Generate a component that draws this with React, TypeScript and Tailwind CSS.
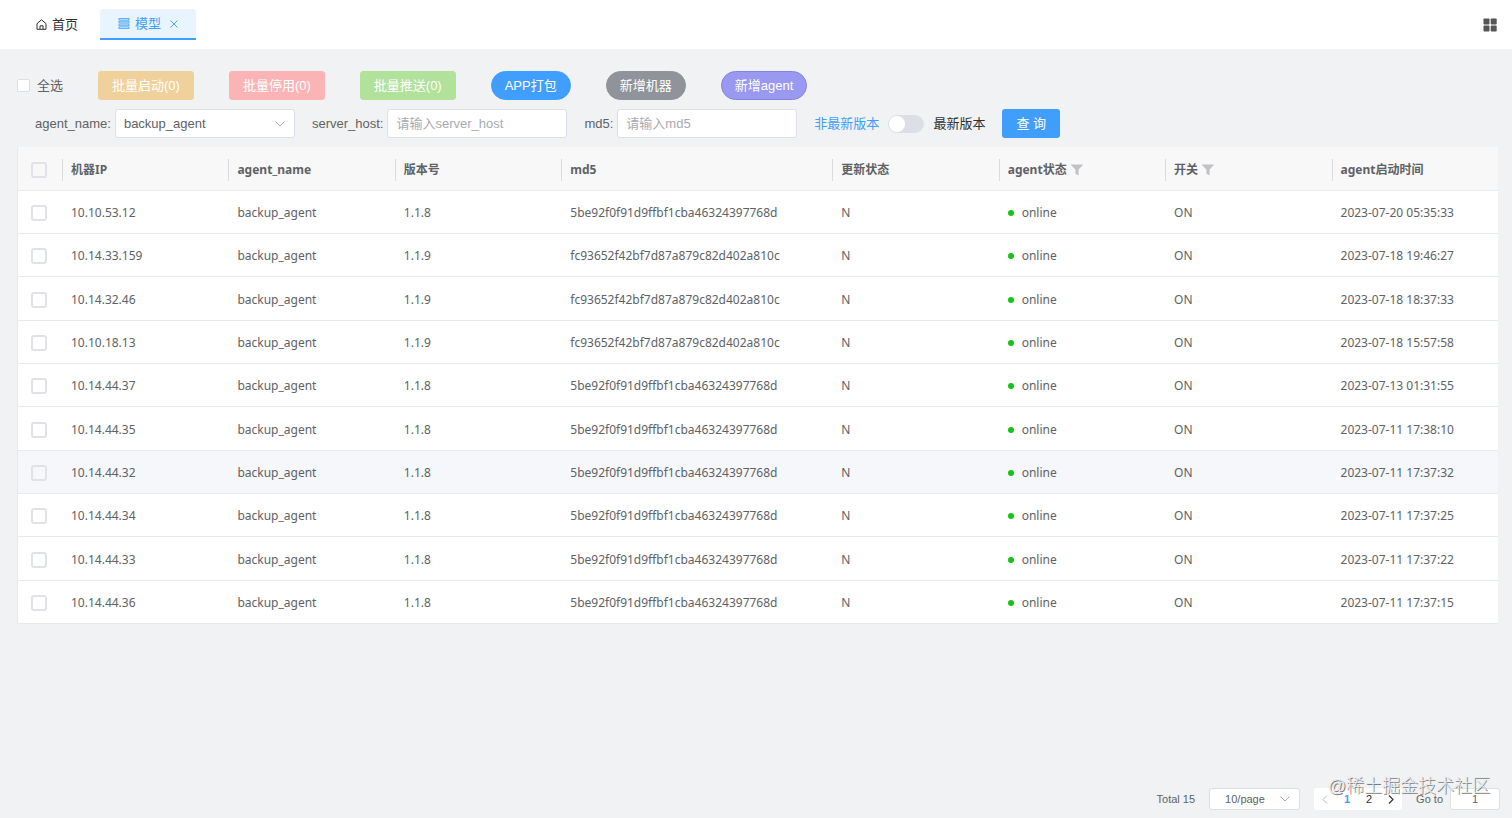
import React, { useState } from 'react';

interface Machine {
  ip: string;
  version: string;
  md5: string;
  startedAt: string;
}

const MD5_118 = '5be92f0f91d9ffbf1cba46324397768d';
const MD5_119 = 'fc93652f42bf7d87a879c82d402a810c';

const MACHINES: Machine[] = [
  { ip: '10.10.53.12', version: '1.1.8', md5: MD5_118, startedAt: '2023-07-20 05:35:33' },
  { ip: '10.14.33.159', version: '1.1.9', md5: MD5_119, startedAt: '2023-07-18 19:46:27' },
  { ip: '10.14.32.46', version: '1.1.9', md5: MD5_119, startedAt: '2023-07-18 18:37:33' },
  { ip: '10.10.18.13', version: '1.1.9', md5: MD5_119, startedAt: '2023-07-18 15:57:58' },
  { ip: '10.14.44.37', version: '1.1.8', md5: MD5_118, startedAt: '2023-07-13 01:31:55' },
  { ip: '10.14.44.35', version: '1.1.8', md5: MD5_118, startedAt: '2023-07-11 17:38:10' },
  { ip: '10.14.44.32', version: '1.1.8', md5: MD5_118, startedAt: '2023-07-11 17:37:32' },
  { ip: '10.14.44.34', version: '1.1.8', md5: MD5_118, startedAt: '2023-07-11 17:37:25' },
  { ip: '10.14.44.33', version: '1.1.8', md5: MD5_118, startedAt: '2023-07-11 17:37:22' },
  { ip: '10.14.44.36', version: '1.1.8', md5: MD5_118, startedAt: '2023-07-11 17:37:15' },
];

const COLUMNS = [
  { title: '机器IP' },
  { title: 'agent_name' },
  { title: '版本号' },
  { title: 'md5', width: 'w-[271px]' },
  { title: '更新状态' },
  { title: 'agent状态', filter: true },
  { title: '开关', filter: true },
  { title: 'agent启动时间' },
];

const ACTIONS = [
  { label: '批量启动(0)', style: 'rounded-[3px] bg-[#f0d09b] border-[#f0d09b]' },
  { label: '批量停用(0)', style: 'rounded-[3px] bg-[#fbb4b5] border-[#fbb4b5]' },
  { label: '批量推送(0)', style: 'rounded-[3px] bg-[#b1e19a] border-[#b1e19a]' },
  { label: 'APP打包', style: 'rounded-full bg-[#409eff] border-[#409eff]' },
  { label: '新增机器', style: 'rounded-full bg-[#909399] border-[#909399]' },
  { label: '新增agent', style: 'rounded-full bg-[#9a99f2] border-[#8583e0]' },
];

const HomeIcon = () => (
  <svg className="size-[11px]" viewBox="0 0 11 11" fill="none" stroke="currentColor" strokeWidth="1" aria-hidden="true">
    <path d="M1 10.3V4.6L5.5.8 10 4.6v5.7zM4 10V6.8h3V10" />
  </svg>
);

const ListIcon = () => (
  <svg className="h-[11px] w-3" viewBox="0 0 12 11" fill="none" stroke="currentColor" strokeWidth=".8" aria-hidden="true">
    <path d="M.9.5h10.2v1.6H.9zM.9 3.3h10.2v1.6H.9zM.9 6.1h10.2v1.6H.9zM.9 8.9h10.2v1.6H.9z" />
  </svg>
);

const CloseIcon = () => (
  <svg className="size-2" viewBox="0 0 7 7" fill="none" stroke="currentColor" strokeWidth=".8" aria-hidden="true">
    <path d="m.4.4 6.2 6.2M6.6.4.4 6.6" />
  </svg>
);

const GridIcon = () => (
  <svg className="size-[14px]" viewBox="0 0 14 14" fill="currentColor" aria-hidden="true">
    <rect x=".5" y=".5" width="6" height="6" rx=".8" />
    <rect x="7.7" y=".5" width="6" height="6" rx=".8" />
    <rect x=".5" y="7.6" width="6" height="6" rx=".8" />
    <rect x="7.7" y="7.6" width="6" height="6" rx=".8" />
  </svg>
);

const ChevronDown = () => (
  <svg className="pointer-events-none absolute right-[10px] h-[6px] w-[10px] text-[#a8abb2]" viewBox="0 0 10 6" fill="none" stroke="currentColor" aria-hidden="true">
    <path d="M.5.5 5 5 9.5.5" />
  </svg>
);

const FilterIcon = () => (
  <svg className="h-3 w-3" viewBox="0 0 13 12" fill="#c0c2c6" aria-hidden="true">
    <path d="M.3 0h12.1c.4 0 .5.5.2.8L8.2 5.4V12L4.8 10V5.4L.1.8C-.1.5 0 0 .3 0z" />
  </svg>
);

const App: React.FC = () => {
  const [checked, setChecked] = useState<Record<string, boolean>>({});
  const [latest, setLatest] = useState(false);

  const allChecked = MACHINES.every(m => checked[m.ip]);

  const toggleAll = () =>
    setChecked(Object.fromEntries(MACHINES.map(m => [m.ip, !allChecked])));

  const toggle = (ip: string) => setChecked(prev => ({ ...prev, [ip]: !prev[ip] }));

  const field = 'h-[29px] w-[180px] rounded-[3px] border border-[#dcdfe6] bg-white text-[#606266] placeholder:text-[#a8abb2] outline-none';
  const box = 'block appearance-none border checked:border-[#409eff] checked:bg-[#409eff]';

  return (
    <div className="relative flex min-h-screen flex-col bg-[#f0f2f4] font-['Liberation_Sans','Noto_Sans_CJK_SC',sans-serif] text-[13px] leading-5 text-[#606266]">
      <header className="flex h-[49px] items-center justify-between bg-white pr-[15px] pl-9">
        <nav className="flex items-center gap-[22px]">
          <a href="#home" className="flex items-center gap-[5px] text-[#303133]">
            <HomeIcon />
            首页
          </a>
          <div className="flex h-[31px] items-center gap-[9px] rounded-t-[3px] border-b-2 border-[#409eff] bg-[#e8f4ff] px-[18px] text-[#409eff]">
            <a href="#model" className="flex items-center gap-[5px]">
              <ListIcon />
              模型
            </a>
            <button type="button" aria-label="关闭">
              <CloseIcon />
            </button>
          </div>
        </nav>
        <button type="button" aria-label="菜单" className="text-[#555]">
          <GridIcon />
        </button>
      </header>

      <main className="flex flex-1 flex-col pt-[22px] pr-[14px] pb-2 pl-[17px]">
        <div className="flex items-center gap-[35px]">
          <label className="flex items-center gap-[7px]">
            <input type="checkbox" checked={allChecked} onChange={toggleAll} className={`${box} size-[13px] rounded-[2px] border-[#dcdfe6] bg-white`} />
            全选
          </label>
          {ACTIONS.map(action => (
            <button key={action.label} type="button" className={`h-[29px] border px-[13px] text-white ${action.style}`}>
              {action.label}
            </button>
          ))}
        </div>

        <form className="mt-[9px] flex items-center gap-[17px] pl-[18px]" onSubmit={e => e.preventDefault()}>
          <div className="flex items-center gap-1">
            <label htmlFor="agent-name">agent_name:</label>
            <div className="relative flex items-center">
              <select id="agent-name" className={`${field} appearance-none px-2`}>
                <option>backup_agent</option>
              </select>
              <ChevronDown />
            </div>
          </div>
          <div className="flex items-center gap-1">
            <label htmlFor="server-host">server_host:</label>
            <input id="server-host" type="text" placeholder="请输入server_host" className={`${field} px-2`} />
          </div>
          <div className="flex items-center gap-1">
            <label htmlFor="md5">md5:</label>
            <input id="md5" type="text" placeholder="请输入md5" className={`${field} px-2`} />
          </div>
          <label className="flex items-center gap-[9px]">
            <span className={latest ? 'text-[#303133]' : 'text-[#409eff]'}>非最新版本</span>
            <input
              type="checkbox"
              role="switch"
              checked={latest}
              onChange={e => setLatest(e.target.checked)}
              className="relative h-[18px] w-9 appearance-none rounded-full bg-[#dcdfe6] before:absolute before:top-px before:left-px before:size-4 before:rounded-full before:bg-white checked:bg-[#409eff] checked:before:left-[19px]"
            />
            <span className={latest ? 'text-[#409eff]' : 'text-[#303133]'}>最新版本</span>
          </label>
          <button type="submit" className="h-[29px] rounded-[3px] bg-[#409eff] px-[14px] text-white">
            查 询
          </button>
        </form>

        <table className="mt-[9px] w-full table-fixed border-separate border-spacing-0 border-l border-[#e8eaec] bg-white font-['Noto_Sans','Noto_Sans_CJK_SC',sans-serif] text-[12px]">
          <thead>
            <tr className="h-11 bg-[#f8f8f9] text-left">
              <th className="w-11 border-b border-[#e8eaec] pt-0.5 pl-[13px]">
                <input type="checkbox" aria-label="选择全部" checked={allChecked} onChange={toggleAll} className={`${box} size-4 rounded-[3px] border-2 border-[#e0e2e6]`} />
              </th>
              {COLUMNS.map(col => (
                <th key={col.title} className={`border-b border-[#e8eaec] pt-0.5 font-bold ${col.width ?? ''}`}>
                  <div className="flex h-[22px] items-center gap-1 border-l border-[#d9dbde] pl-2">
                    {col.title}
                    {col.filter && (
                      <button type="button" aria-label={`筛选${col.title}`}>
                        <FilterIcon />
                      </button>
                    )}
                  </div>
                </th>
              ))}
            </tr>
          </thead>
          <tbody className="[&_td]:border-b [&_td]:border-[#e8eaec] [&_td]:pt-0.5 [&_td]:pl-[9px]">
            {MACHINES.map(m => (
              <tr key={m.ip} className={`h-[43px] nth-[3n]:h-11 hover:bg-[#f5f7fa] ${m.ip === '10.14.44.32' ? 'bg-[#f5f7fa]' : ''}`}>
                <td>
                  <input type="checkbox" aria-label={m.ip} checked={!!checked[m.ip]} onChange={() => toggle(m.ip)} className={`${box} ml-1 size-4 rounded-[3px] border-2 border-[#e0e2e6]`} />
                </td>
                <td>{m.ip}</td>
                <td>backup_agent</td>
                <td>{m.version}</td>
                <td>{m.md5}</td>
                <td>N</td>
                <td>
                  <span className="flex items-center gap-2">
                    <span className="size-[6px] rounded-full bg-[#13c413]" />
                    online
                  </span>
                </td>
                <td>ON</td>
                <td>{m.startedAt}</td>
              </tr>
            ))}
          </tbody>
        </table>

        <footer className="-mr-0.5 mt-auto flex items-center justify-end gap-[14px] pt-4 text-[11px]">
          <span>Total 15</span>
          <div className="relative flex items-center">
            <select aria-label="每页条数" className="h-[22px] w-[91px] appearance-none rounded-[3px] border border-[#dcdfe6] bg-white pl-[15px] outline-none">
              <option>10/page</option>
            </select>
            <ChevronDown />
          </div>
          <nav className="flex h-[22px] items-center rounded-[3px] bg-white text-[#303133]">
            <button type="button" aria-label="上一页" className="flex w-[22px] justify-center text-[#b4b8bf]">
              <svg className="h-[9px] w-[6px]" viewBox="0 0 6 9" fill="none" stroke="currentColor" aria-hidden="true">
                <path d="M5 .5 1 4.5l4 4" />
              </svg>
            </button>
            <button type="button" className="w-[22px] font-bold text-[#409eff]">1</button>
            <button type="button" className="w-[22px]">2</button>
            <button type="button" aria-label="下一页" className="flex w-[22px] justify-center">
              <svg className="h-[9px] w-[6px]" viewBox="0 0 6 9" fill="none" stroke="currentColor" strokeWidth="1.2" aria-hidden="true">
                <path d="m1 .5 4 4-4 4" />
              </svg>
            </button>
          </nav>
          <label className="flex items-center gap-[7px]">
            Go to
            <input type="text" defaultValue="1" className="h-[22px] w-[50px] rounded-[3px] border border-[#dcdfe6] bg-white text-center outline-none" />
          </label>
        </footer>
      </main>

      <p className="pointer-events-none absolute right-[22px] bottom-5 text-[18px] leading-6 font-light text-[#e9eaec] [text-shadow:1px_1px_0_#7c7d80]">
        @稀土掘金技术社区
      </p>
    </div>
  );
};

export default App;
